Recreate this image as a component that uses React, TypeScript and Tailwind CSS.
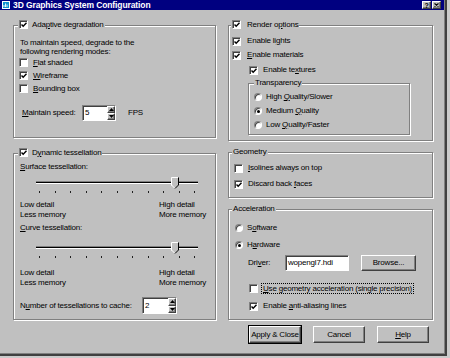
import React from 'react';

// Win95-ish bevels, reused everywhere
const sunken =
  'border border-t-[#808080] border-l-[#808080] border-r-white border-b-white shadow-[inset_1px_1px_0_#404040]';
const raised =
  'border border-t-white border-l-white border-r-[#404040] border-b-[#404040] shadow-[inset_-1px_-1px_0_#808080]';

const U = ({ children }: { children: React.ReactNode }) => (
  <span className="underline decoration-1 underline-offset-[1px]">{children}</span>
);

function CheckBox({ checked }: { checked?: boolean }) {
  return (
    <span className={`flex h-[9px] w-[9px] shrink-0 items-center justify-center bg-white ${sunken}`}>
      {checked && (
        <svg width="6" height="6" viewBox="0 0 6 6" className="ml-[1px] mt-[1px]">
          <path d="M0.5 2.5 L2.2 4.3 L5.5 0.8" stroke="#000" strokeWidth="1.4" fill="none" />
        </svg>
      )}
    </span>
  );
}

function Radio({ on }: { on?: boolean }) {
  return (
    <span className="flex h-[8px] w-[8px] shrink-0 items-center justify-center rounded-full bg-white border border-t-[#808080] border-l-[#808080] border-r-white border-b-white shadow-[inset_1px_1px_0_#404040]">
      {on && <span className="ml-[1px] mt-[1px] h-[3px] w-[3px] rounded-full bg-black" />}
    </span>
  );
}

function CheckRow({ checked, children, className = '' }: { checked?: boolean; children: React.ReactNode; className?: string }) {
  return (
    <div className={`flex items-center gap-[5px] ${className}`}>
      <CheckBox checked={checked} />
      <span>{children}</span>
    </div>
  );
}

function RadioRow({ on, children, className = '' }: { on?: boolean; children: React.ReactNode; className?: string }) {
  return (
    <div className={`flex items-center gap-[4px] ${className}`}>
      <Radio on={on} />
      <span>{children}</span>
    </div>
  );
}

function Group({
  label,
  labelClass = '',
  className = '',
  children,
}: {
  label: React.ReactNode;
  labelClass?: string;
  className?: string;
  children: React.ReactNode;
}) {
  return (
    <div className={`relative flex flex-col border border-[#808080] shadow-[inset_1px_1px_0_#fff,1px_1px_0_#fff] ${className}`}>
      <div className={`absolute top-[-7px] flex h-[11px] items-center gap-[5px] bg-[#c0c0c0] px-[1px] ${labelClass}`}>
        {label}
      </div>
      {children}
    </div>
  );
}

function Spin() {
  return (
    <div className="flex h-full w-[8px] flex-col">
      <div className={`flex flex-1 items-center justify-center bg-[#c0c0c0] ${raised}`}>
        <svg width="5" height="3" viewBox="0 0 5 3"><path d="M2.5 0 L5 3 H0 Z" fill="#000" /></svg>
      </div>
      <div className={`flex flex-1 items-center justify-center bg-[#c0c0c0] ${raised}`}>
        <svg width="5" height="3" viewBox="0 0 5 3"><path d="M0 0 H5 L2.5 3 Z" fill="#000" /></svg>
      </div>
    </div>
  );
}

function Slider({ className = '' }: { className?: string }) {
  return (
    <div className={`relative ml-[22px] flex w-[162px] flex-col ${className}`}>
      <div className="mt-[9px] h-[3px] bg-black border-t border-t-[#808080] border-b border-b-white" />
      <div className="mt-[7px] flex justify-between px-[3px]">
        {Array.from({ length: 11 }).map((_, i) => (
          <span key={i} className="h-[2px] w-[1px] bg-[#202020]" />
        ))}
      </div>
      <svg width="8" height="12" viewBox="0 0 8 12" className="absolute left-[135px] top-[5px]">
        <path d="M0.5 0.5 H7.5 V8 L4 11.5 L0.5 8 Z" fill="#c0c0c0" />
        <path d="M0.5 8.5 V0.5 H7" stroke="#fff" fill="none" />
        <path d="M7.5 0.5 V8 L4 11.5" stroke="#000" fill="none" />
        <path d="M0.5 8 L3.6 11.1" stroke="#fff" fill="none" />
      </svg>
    </div>
  );
}

function Btn({ children, def }: { children: React.ReactNode; def?: boolean }) {
  return (
    <div
      className={`flex h-[17px] w-[52px] items-center justify-center bg-[#c0c0c0] ${raised} ${def ? 'outline outline-1 outline-black' : ''}`}
    >
      {children}
    </div>
  );
}

export default function App() {
  return (
    <div className="h-[358px] w-[450px] overflow-hidden bg-[#cbcbcb] font-['Liberation_Sans',Arial,sans-serif] text-[8px] tracking-[-0.2px] text-black">
      <div className="flex h-[356px] w-[447px] flex-col bg-[#c0c0c0] border-r-2 border-b-2 border-[#404040] shadow-[inset_-1px_-1px_0_#808080]">
        {/* title bar */}
        <div className="flex h-[10px] w-[444px] items-center bg-[#000080] pl-[2px] pr-[3px]">
          <svg width="8" height="8" viewBox="0 0 8 8" className="shrink-0">
            <rect x="0" y="0" width="8" height="8" fill="#fff" />
            <rect x="1" y="1" width="6" height="6" fill="#1090d0" />
            <path d="M2 6 V4 M3.5 6 V2.5 M5 6 V3.5" stroke="#fff" strokeWidth="0.9" />
          </svg>
          <span className="ml-[3px] text-[8.5px] font-bold tracking-[-0.1px] text-white">
            3D Graphics System Configuration
          </span>
          <div className="ml-auto flex gap-[1px]">
            <div className={`flex h-[8px] w-[9px] items-center justify-center bg-[#c0c0c0] ${raised} text-[7px] font-bold leading-none`}>
              ?
            </div>
            <div className={`flex h-[8px] w-[9px] items-center justify-center bg-[#c0c0c0] ${raised}`}>
              <svg width="5" height="4" viewBox="0 0 5 4"><path d="M0.5 0.5 L4.5 3.5 M4.5 0.5 L0.5 3.5" stroke="#000" strokeWidth="1.1" /></svg>
            </div>
          </div>
        </div>

        {/* body */}
        <div className="flex gap-[12px] pl-[13px] pt-[15px]">
          {/* left column */}
          <div className="flex w-[203px] flex-col">
            <Group
              className="h-[113px] pl-[5px] pt-[12px]"
              labelClass="left-[4px]"
              label={
                <>
                  <CheckBox checked />
                  <span className="ml-[-1px]">
                    Ada<U>p</U>tive degradation
                  </span>
                </>
              }
            >
              <div className="pl-[1px] leading-[9px]">
                To maintain speed, degrade to the
                <br />
                following rendering modes:
              </div>
              <CheckRow className="h-[13px]">
                <U>F</U>lat shaded
              </CheckRow>
              <CheckRow checked className="h-[13px]">
                <U>W</U>ireframe
              </CheckRow>
              <CheckRow className="h-[13px]">
                <U>B</U>ounding box
              </CheckRow>
              <div className="mt-[10px] flex h-[16px] items-center pl-[3px]">
                <span className="w-[60px]">
                  <U>M</U>aintain speed:
                </span>
                <div className={`flex h-[16px] w-[34px] items-stretch bg-white ${sunken}`}>
                  <span className="flex-1 pl-[2px] leading-[14px]">5</span>
                  <Spin />
                </div>
                <span className="ml-[12px]">FPS</span>
              </div>
            </Group>

            <Group
              className="mt-[15px] h-[167px] pt-[8px]"
              labelClass="left-[4px]"
              label={
                <>
                  <CheckBox checked />
                  <span className="ml-[-1px]">
                    D<U>y</U>namic tessellation
                  </span>
                </>
              }
            >
              <div className="h-[10px] pl-[6px] leading-[10px]">
                <U>S</U>urface tessellation:
              </div>
              <Slider />
              <div className="mt-[7px] flex pl-[6px] leading-[10px]">
                <div className="w-[139px]">
                  Low detail
                  <br />
                  Less memory
                </div>
                <div>
                  High detail
                  <br />
                  More memory
                </div>
              </div>
              <div className="mt-[3px] h-[10px] pl-[6px] leading-[10px]">
                <U>C</U>urve tessellation:
              </div>
              <Slider className="mt-[4px]" />
              <div className="mt-[10px] flex pl-[6px] leading-[10px]">
                <div className="w-[139px]">
                  Low detail
                  <br />
                  Less memory
                </div>
                <div>
                  High detail
                  <br />
                  More memory
                </div>
              </div>
              <div className="mt-[9px] flex h-[17px] items-center pl-[6px]">
                <span className="w-[122px]">
                  N<U>u</U>mber of tessellations to cache:
                </span>
                <div className={`flex h-[17px] w-[35px] items-stretch bg-white ${sunken}`}>
                  <span className="flex-1 pl-[2px] leading-[15px]">2</span>
                  <Spin />
                </div>
              </div>
            </Group>
          </div>

          {/* right column */}
          <div className="flex w-[205px] flex-col">
            <Group
              className="h-[116px] pl-[3px] pt-[8px]"
              labelClass="left-[2px]"
              label={
                <>
                  <CheckBox checked />
                  <span className="ml-[1px]">
                    Render o<U>p</U>tions
                  </span>
                </>
              }
            >
              <CheckRow checked className="h-[14px] gap-[6px]">
                Enable li<U>g</U>hts
              </CheckRow>
              <CheckRow checked className="h-[14px] gap-[6px]">
                <U>E</U>nable materials
              </CheckRow>
              <CheckRow checked className="mt-[1px] h-[14px] pl-[17px]">
                Enable te<U>x</U>tures
              </CheckRow>
              <Group
                className="ml-[16px] mt-[6px] h-[52px] w-[162px] pl-[5px] pt-[6px]"
                labelClass="left-[5px]"
                label={<span>Transparency</span>}
              >
                <RadioRow className="h-[14px]">
                  High <U>Q</U>uality/Slower
                </RadioRow>
                <RadioRow on className="h-[13px]">
                  Medium <U>Q</U>uality
                </RadioRow>
                <RadioRow className="mt-[1px] h-[14px]">
                  Low <U>Q</U>uality/Faster
                </RadioRow>
              </Group>
            </Group>

            <Group
              className="mt-[11px] h-[46px] pl-[5px] pt-[8px]"
              labelClass="left-[3px]"
              label={<span>Geometry</span>}
            >
              <CheckRow className="h-[14px] gap-[4px]">
                <U>I</U>solines always on top
              </CheckRow>
              <CheckRow checked className="mt-[2px] h-[14px] gap-[4px]">
                Discard back <U>f</U>aces
              </CheckRow>
            </Group>

            <Group
              className="mt-[11px] h-[111px] pt-[11px]"
              labelClass="left-[3px]"
              label={<span>Acceleration</span>}
            >
              <RadioRow className="h-[14px] pl-[6px]">
                S<U>o</U>ftware
              </RadioRow>
              <RadioRow on className="mt-[3px] h-[14px] pl-[6px]">
                H<U>a</U>rdware
              </RadioRow>
              <div className="mt-[3px] flex h-[16px] items-center pl-[19px]">
                <span className="w-[37px]">
                  Dri<U>v</U>er:
                </span>
                <div className={`flex h-[16px] w-[64px] items-center bg-white pl-[2px] ${sunken}`}>wopengl7.hdi</div>
                <div className={`ml-[12px] flex h-[16px] w-[55px] items-center justify-center bg-[#c0c0c0] ${raised}`}>
                  Browse...
                </div>
              </div>
              <div className="mt-[10px] flex h-[14px] items-center pl-[20px]">
                <CheckBox />
                <span className="ml-[3px] shrink-0 border border-dotted border-black px-[1px] leading-[9px]">
                  <U>U</U>se geometry acceleration (single precision)
                </span>
              </div>
              <CheckRow checked className="mt-[4px] h-[14px] gap-[4px] pl-[20px]">
                Enable <U>a</U>nti-aliasing lines
              </CheckRow>
            </Group>

            <div className="ml-[21px] mt-[6px] flex gap-[12px]">
              <Btn def>Apply &amp; Close</Btn>
              <Btn>Cancel</Btn>
              <Btn>
                <U>H</U>elp
              </Btn>
            </div>
          </div>
        </div>
      </div>
    </div>
  );
}
